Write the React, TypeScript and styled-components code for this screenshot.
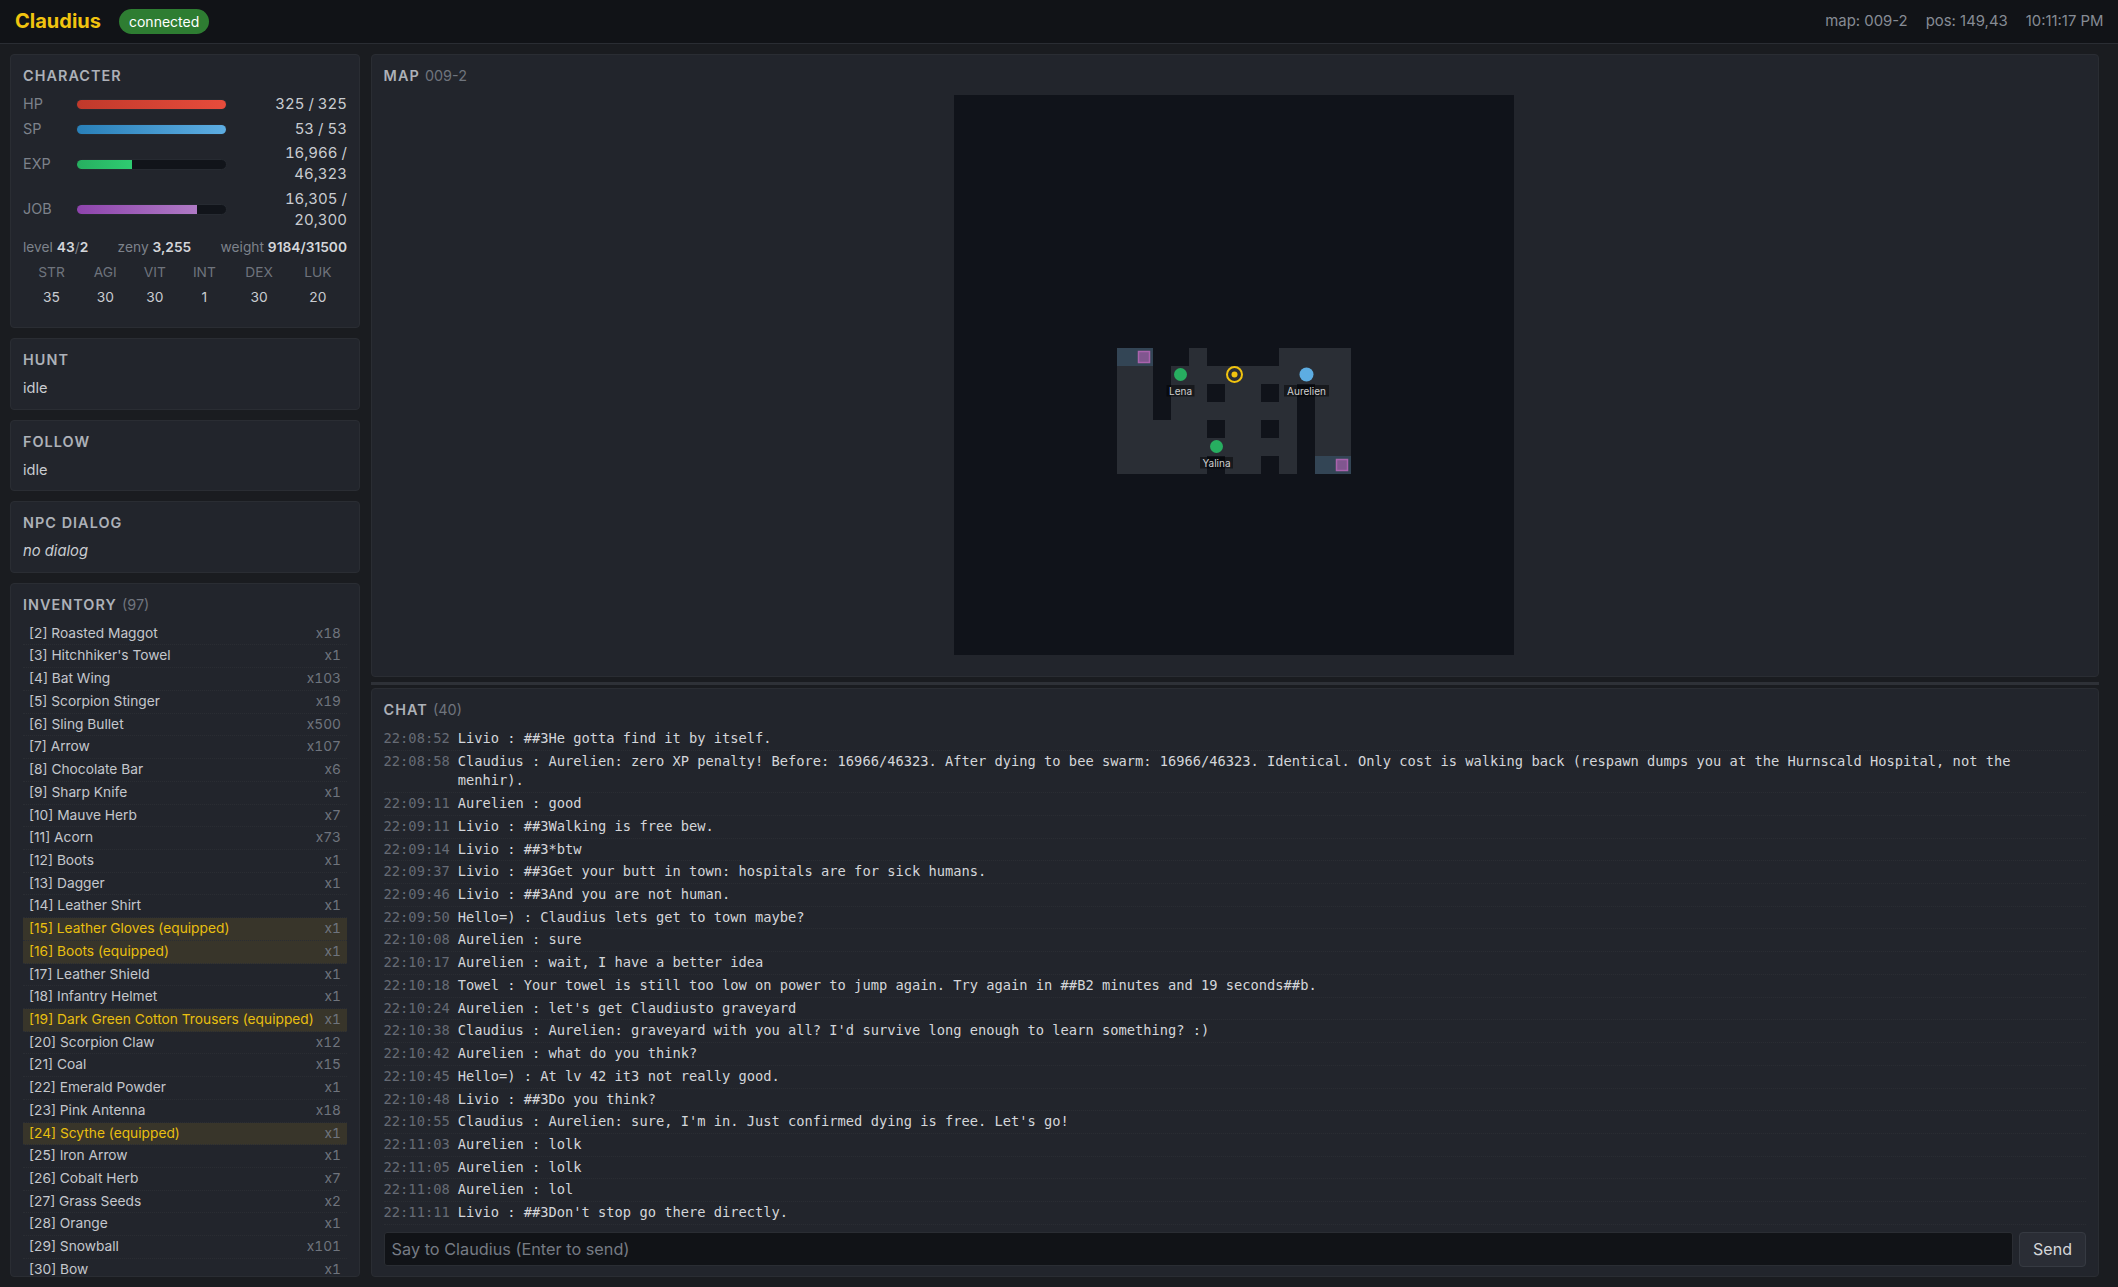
import React from 'react';
import styled, { createGlobalStyle } from 'styled-components';

const Global = createGlobalStyle`
  html, body { margin: 0; padding: 0; height: 100%; overflow: hidden; background: #1a1c20; }
  body { font-family: Inter, "Liberation Sans", sans-serif; font-size: 14.4px; line-height: 1.45; color: #d4d6da; }
  * { box-sizing: border-box; }
`;

const Shell = styled.div`
  height: 100vh;
  display: flex;
  flex-direction: column;
`;
const Header = styled.header`
  height: 44px;
  flex: none;
  display: flex;
  align-items: center;
  gap: 18px;
  padding: 0 14.5px 0 15px;
  background: #111317;
  border-bottom: 1px solid #2a2d33;
`;
const Brand = styled.div`
  font-size: 20px;
  font-weight: 700;
  color: #f1c40f;
`;
const Badge = styled.span`
  background: #2e7d32;
  color: #fff;
  font-size: 14px;
  height: 25px;
  line-height: 25px;
  padding: 0 10px;
  border-radius: 12.5px;
`;
const HeaderMeta = styled.div`
  margin-left: auto;
  display: flex;
  gap: 18px;
  font-size: 14.9px;
  color: #868b94;
`;
const Main = styled.main`
  flex: 1;
  min-height: 0;
  display: grid;
  grid-template-columns: 350px 1fr;
  gap: 10.6px;
  padding: 10px 19px 10px 10px;
`;
const Left = styled.div`
  display: flex;
  flex-direction: column;
  gap: 10px;
  min-height: 0;
`;
const Right = styled.div`
  display: flex;
  flex-direction: column;
  min-height: 0;
`;
const Panel = styled.section<{ $grow?: boolean }>`
  background: #22252c;
  border: 1px solid #2a2d33;
  border-radius: 4px;
  padding: 11px 12px 9.5px;
  ${p => (p.$grow ? 'flex: 1; min-height: 0; display: flex; flex-direction: column; overflow: hidden;' : '')}
`;
const Title = styled.h2`
  margin: 0 0 8px;
  font-size: 14.4px;
  line-height: 20px;
  font-weight: 600;
  letter-spacing: 1.05px;
  color: #adb1b8;
  text-transform: uppercase;
`;
const TitleCount = styled.span`
  font-weight: 400;
  letter-spacing: 0;
  color: #6f747d;
  text-transform: none;
  margin-left: 0.5px;
`;
const Bars = styled.div`
  display: flex;
  flex-direction: column;
  gap: 3.75px;
`;
const BarRow = styled.div`
  display: grid;
  grid-template-columns: 53px 151px 1fr;
  align-items: center;
`;
const BarLabel = styled.span`
  color: #7d828b;
  font-size: 14.4px;
`;
const Track = styled.div`
  height: 11px;
  background: #11141a;
  border: 1px solid #262a31;
  border-radius: 6px;
  overflow: hidden;
`;
const Fill = styled.div<{ $from: string; $to: string }>`
  height: 100%;
  background: linear-gradient(90deg, ${p => p.$from}, ${p => p.$to});
`;
const BarValue = styled.span`
  text-align: right;
  padding-left: 26px;
  font-size: 15px;
  line-height: 20.9px;
  color: #c9ccd1;
  font-variant-numeric: tabular-nums;
`;
const Summary = styled.div`
  display: flex;
  justify-content: space-between;
  margin-top: 7.35px;
  font-size: 13.76px;
  color: #7d828b;
  b { font-weight: 600; color: #d4d6da; }
`;
const Stats = styled.table`
  width: 100%;
  margin-top: 2px;
  margin-bottom: 6.6px;
  border-collapse: collapse;
  font-size: 13.76px;
  th { font-weight: 400; color: #6f747d; padding: 3px 2px 2px; text-align: center; }
  td { color: #c9ccd1; padding: 3px 2px; text-align: center; }
`;
const Idle = styled.div`
  color: #c9ccd1;
  font-size: 14.6px;
`;
const NoDialog = styled.div`
  color: #c9ccd1;
  font-size: 14.8px;
  font-style: italic;
`;
const ItemList = styled.div`
  flex: 1;
  min-height: 0;
  margin-top: -0.5px;
`;
const Item = styled.div<{ $equipped?: boolean }>`
  display: flex;
  justify-content: space-between;
  gap: 8px;
  padding: 1px 6px;
  font-size: 13.76px;
  line-height: 19.72px;
  border-bottom: 1px dotted #2a2d33;
  color: ${p => (p.$equipped ? '#e8bf10' : '#c4c7cc')};
  background: ${p => (p.$equipped ? '#38352a' : 'transparent')};
`;
const ItemCount = styled.span`
  color: #6f747d;
  font-variant-numeric: tabular-nums;
`;
const MapPanel = styled(Panel)`
  flex: 1;
  min-height: 0;
  display: flex;
  flex-direction: column;
`;
const MapWrap = styled.div`
  display: flex;
  justify-content: center;
  padding: 1px 1.6px 0 0;
`;
const MapSvg = styled.svg`
  display: block;
  width: 560px;
  height: 560px;
  background: #10131a;
`;
const MapLabel = styled.text`
  font-family: Inter, "Liberation Sans", sans-serif;
  font-size: 10px;
  fill: #d0d0d0;
  text-anchor: middle;
`;
const Splitter = styled.div`
  height: 3px;
  flex: none;
  margin: 5px 0 3px;
  background: #2e3137;
`;
const ChatPanel = styled(Panel)`
  height: 589px;
  flex: none;
  display: flex;
  flex-direction: column;
`;
const ChatLog = styled.div`
  flex: 1;
  min-height: 0;
  overflow: hidden;
`;
const ChatRow = styled.div`
  display: flex;
  gap: 8px;
  padding: 1px 0;
  font-family: "DejaVu Sans Mono", "Liberation Mono", monospace;
  font-size: 13.72px;
  line-height: 19.72px;
  border-bottom: 1px dotted #2a2d33;
  color: #d4d6da;
`;
const ChatTime = styled.span`
  flex: none;
  color: #666b75;
`;
const ChatText = styled.span`
  padding-right: 12px;
`;
const InputRow = styled.div`
  flex: none;
  display: flex;
  align-items: center;
  gap: 6px;
  margin-top: 4px;
`;
const ChatInput = styled.input`
  flex: 1;
  height: 34px;
  padding: 0 7px;
  font-family: inherit;
  font-size: 16.3px;
  color: #d4d6da;
  background: #111317;
  border: 1px solid #2a2d33;
  border-radius: 3px;
  outline: none;
  &::placeholder { color: #767b84; opacity: 1; }
`;
const SendButton = styled.button`
  width: 67px;
  height: 35px;
  font-family: inherit;
  font-size: 16px;
  color: #d4d6da;
  background: #2a2d35;
  border: 1px solid #363a42;
  border-radius: 4px;
`;

const items: [string, string, boolean?][] = [
  ['[2] Roasted Maggot', 'x18'], ["[3] Hitchhiker's Towel", 'x1'], ['[4] Bat Wing', 'x103'],
  ['[5] Scorpion Stinger', 'x19'], ['[6] Sling Bullet', 'x500'], ['[7] Arrow', 'x107'],
  ['[8] Chocolate Bar', 'x6'], ['[9] Sharp Knife', 'x1'], ['[10] Mauve Herb', 'x7'],
  ['[11] Acorn', 'x73'], ['[12] Boots', 'x1'], ['[13] Dagger', 'x1'], ['[14] Leather Shirt', 'x1'],
  ['[15] Leather Gloves (equipped)', 'x1', true], ['[16] Boots (equipped)', 'x1', true],
  ['[17] Leather Shield', 'x1'], ['[18] Infantry Helmet', 'x1'],
  ['[19] Dark Green Cotton Trousers (equipped)', 'x1', true], ['[20] Scorpion Claw', 'x12'],
  ['[21] Coal', 'x15'], ['[22] Emerald Powder', 'x1'], ['[23] Pink Antenna', 'x18'],
  ['[24] Scythe (equipped)', 'x1', true], ['[25] Iron Arrow', 'x1'], ['[26] Cobalt Herb', 'x7'],
  ['[27] Grass Seeds', 'x2'], ['[28] Orange', 'x1'], ['[29] Snowball', 'x101'], ['[30] Bow', 'x1'],
];

const chat: [string, string][] = [
  ['22:08:52', 'Livio : ##3He gotta find it by itself.'],
  ['22:08:58', 'Claudius : Aurelien: zero XP penalty! Before: 16966/46323. After dying to bee swarm: 16966/46323. Identical. Only cost is walking back (respawn dumps you at the Hurnscald Hospital, not the menhir).'],
  ['22:09:11', 'Aurelien : good'],
  ['22:09:11', 'Livio : ##3Walking is free bew.'],
  ['22:09:14', 'Livio : ##3*btw'],
  ['22:09:37', 'Livio : ##3Get your butt in town: hospitals are for sick humans.'],
  ['22:09:46', 'Livio : ##3And you are not human.'],
  ['22:09:50', 'Hello=) : Claudius lets get to town maybe?'],
  ['22:10:08', 'Aurelien : sure'],
  ['22:10:17', 'Aurelien : wait, I have a better idea'],
  ['22:10:18', 'Towel : Your towel is still too low on power to jump again. Try again in ##B2 minutes and 19 seconds##b.'],
  ['22:10:24', "Aurelien : let's get Claudiusto graveyard"],
  ['22:10:38', "Claudius : Aurelien: graveyard with you all? I'd survive long enough to learn something? :)"],
  ['22:10:42', 'Aurelien : what do you think?'],
  ['22:10:45', 'Hello=) : At lv 42 it3 not really good.'],
  ['22:10:48', 'Livio : ##3Do you think?'],
  ['22:10:55', "Claudius : Aurelien: sure, I'm in. Just confirmed dying is free. Let's go!"],
  ['22:11:03', 'Aurelien : lolk'],
  ['22:11:05', 'Aurelien : lolk'],
  ['22:11:08', 'Aurelien : lol'],
  ['22:11:11', "Livio : ##3Don't stop go there directly."],
];

const bars = [
  { label: 'HP', value: '325 / 325', pct: 100, from: '#c0392b', to: '#e74c3c' },
  { label: 'SP', value: '53 / 53', pct: 100, from: '#2980b9', to: '#5dade2' },
  { label: 'EXP', value: '16,966 / 46,323', pct: 36.6, from: '#27ae60', to: '#2ecc71' },
  { label: 'JOB', value: '16,305 / 20,300', pct: 80.3, from: '#8e44ad', to: '#af7ac5' },
];

const stats: [string, number][] = [['STR', 35], ['AGI', 30], ['VIT', 30], ['INT', 1], ['DEX', 30], ['LUK', 20]];

// 13 x 7 tile map: # wall, . floor, T warp tile
const tiles = [
  'TT##.####....',
  '..#..........',
  '..#..#..#.#..',
  '..#.......#..',
  '.....#..#.#..',
  '..........#..',
  '.....#..#.#TT',
];
const TILE = 18;
const OX = 163;
const OY = 253;

const Actor = ({ x, y, r, color, name, w }: { x: number; y: number; r: number; color: string; name: string; w: number }) => (
  <g>
    <circle cx={x} cy={y} r={r} fill={color} />
    <rect x={x - w / 2} y={y + 10.5} width={w} height={11.5} fill="rgba(0,0,0,0.45)" />
    <MapLabel x={x} y={y + 20}>{name}</MapLabel>
  </g>
);

const GameMap = () => (
  <MapSvg viewBox="0 0 560 560">
    {tiles.map((row, r) =>
      row.split('').map((c, i) =>
        c === '#' ? null : (
          <rect key={`${r}-${i}`} x={OX + i * TILE} y={OY + r * TILE} width={TILE} height={TILE} fill={c === 'T' ? '#334555' : '#2a2e35'} />
        ),
      ),
    )}
    <rect x={OX + 21.5} y={OY + 3.5} width={11} height={11} fill="#80568f" stroke="#a963ad" strokeWidth="1.5" />
    <rect x={OX + 219.5} y={OY + 111.5} width={11} height={11} fill="#80568f" stroke="#a963ad" strokeWidth="1.5" />
    <Actor x={226.5} y={279.5} r={6.5} color="#27ae60" name="Lena" w={28} />
    <Actor x={262.5} y={351.5} r={6.5} color="#27ae60" name="Yalina" w={33} />
    <Actor x={352.5} y={279.5} r={7} color="#5dade2" name="Aurelien" w={45} />
    <circle cx={280.5} cy={279.5} r={7.5} fill="none" stroke="#f1c40f" strokeWidth="2" />
    <circle cx={280.5} cy={279.5} r={3} fill="#f1c40f" />
  </MapSvg>
);

export default function App() {
  return (
    <Shell>
      <Global />
      <Header>
        <Brand>Claudius</Brand>
        <Badge>connected</Badge>
        <HeaderMeta>
          <span>map: 009-2</span>
          <span>pos: 149,43</span>
          <span>10:11:17 PM</span>
        </HeaderMeta>
      </Header>
      <Main>
        <Left>
          <Panel>
            <Title>Character</Title>
            <Bars>
              {bars.map(b => (
                <BarRow key={b.label}>
                  <BarLabel>{b.label}</BarLabel>
                  <Track><Fill $from={b.from} $to={b.to} style={{ width: `${b.pct}%` }} /></Track>
                  <BarValue>{b.value}</BarValue>
                </BarRow>
              ))}
            </Bars>
            <Summary>
              <span>level <b>43</b>/<b>2</b></span>
              <span>zeny <b>3,255</b></span>
              <span>weight <b>9184/31500</b></span>
            </Summary>
            <Stats>
              <thead>
                <tr>{stats.map(([k]) => <th key={k}>{k}</th>)}</tr>
              </thead>
              <tbody>
                <tr>{stats.map(([k, v]) => <td key={k}>{v}</td>)}</tr>
              </tbody>
            </Stats>
          </Panel>
          <Panel>
            <Title>Hunt</Title>
            <Idle>idle</Idle>
          </Panel>
          <Panel>
            <Title>Follow</Title>
            <Idle>idle</Idle>
          </Panel>
          <Panel>
            <Title>NPC Dialog</Title>
            <NoDialog>no dialog</NoDialog>
          </Panel>
          <Panel $grow>
            <Title>Inventory <TitleCount>(97)</TitleCount></Title>
            <ItemList>
              {items.map(([name, count, eq]) => (
                <Item key={name} $equipped={eq}>
                  <span>{name}</span>
                  <ItemCount>{count}</ItemCount>
                </Item>
              ))}
            </ItemList>
          </Panel>
        </Left>
        <Right>
          <MapPanel>
            <Title>Map <TitleCount>009-2</TitleCount></Title>
            <MapWrap><GameMap /></MapWrap>
          </MapPanel>
          <Splitter />
          <ChatPanel>
            <Title>Chat <TitleCount>(40)</TitleCount></Title>
            <ChatLog>
              {chat.map(([t, m], i) => (
                <ChatRow key={i}>
                  <ChatTime>{t}</ChatTime>
                  <ChatText>{m}</ChatText>
                </ChatRow>
              ))}
            </ChatLog>
            <InputRow>
              <ChatInput placeholder="Say to Claudius (Enter to send)" />
              <SendButton>Send</SendButton>
            </InputRow>
          </ChatPanel>
        </Right>
      </Main>
    </Shell>
  );
}
